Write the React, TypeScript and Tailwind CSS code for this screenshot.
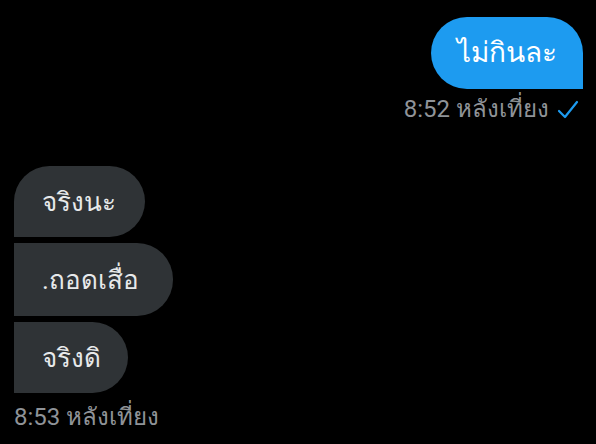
export default function App() {
  const font = { fontFamily: 'Roboto, "Noto Sans", "Liberation Sans", sans-serif' };
  return (
    <div className="w-[596px] h-[444px] bg-black overflow-hidden text-white" style={font}>
      <div className="flex flex-col pt-[17px] px-[13px]">
        {/* outgoing */}
        <div className="flex flex-col items-end">
          <div className="h-[72px] flex items-center bg-[#1d9bf0] rounded-[36px] rounded-br-none px-[26px] text-[28px] leading-none">
            ไม่กินละ
          </div>
          <div className="flex items-center gap-[8px] mt-[6px] mr-[4px] text-[24px] text-[#8f9398] leading-[28px]">
            <span>8:52 หลังเที่ยง</span>
            <svg width="22" height="19" viewBox="0 0 22 19" fill="none" stroke="#1d9bf0" strokeWidth="2.2" strokeLinecap="round" strokeLinejoin="round">
              <path d="M2 11 L8 17 L20 2" />
            </svg>
          </div>
        </div>

        {/* incoming */}
        <div className="flex flex-col items-start gap-[6px] mt-[43px] pl-px">
          <div className="h-[71px] flex items-center bg-[#2f3336] rounded-[36px] rounded-bl-none pl-[28px] pr-[29px] text-[26px] leading-none text-[#e7e9ea]">
            จริงนะ
          </div>
          <div className="h-[73px] flex items-center bg-[#2f3336] rounded-r-[36px] pl-[28px] pr-[34px] text-[26px] leading-none text-[#e7e9ea]">
            .ถอดเสื่อ
          </div>
          <div className="h-[71px] flex items-center bg-[#2f3336] rounded-r-[36px] pl-[28px] pr-[27px] text-[26px] leading-none text-[#e7e9ea]">
            จริงดิ
          </div>
        </div>
        <div className="mt-[10px] pl-px text-[24px] text-[#8f9398] leading-[28px]">8:53 หลังเที่ยง</div>
      </div>
    </div>
  );
}
